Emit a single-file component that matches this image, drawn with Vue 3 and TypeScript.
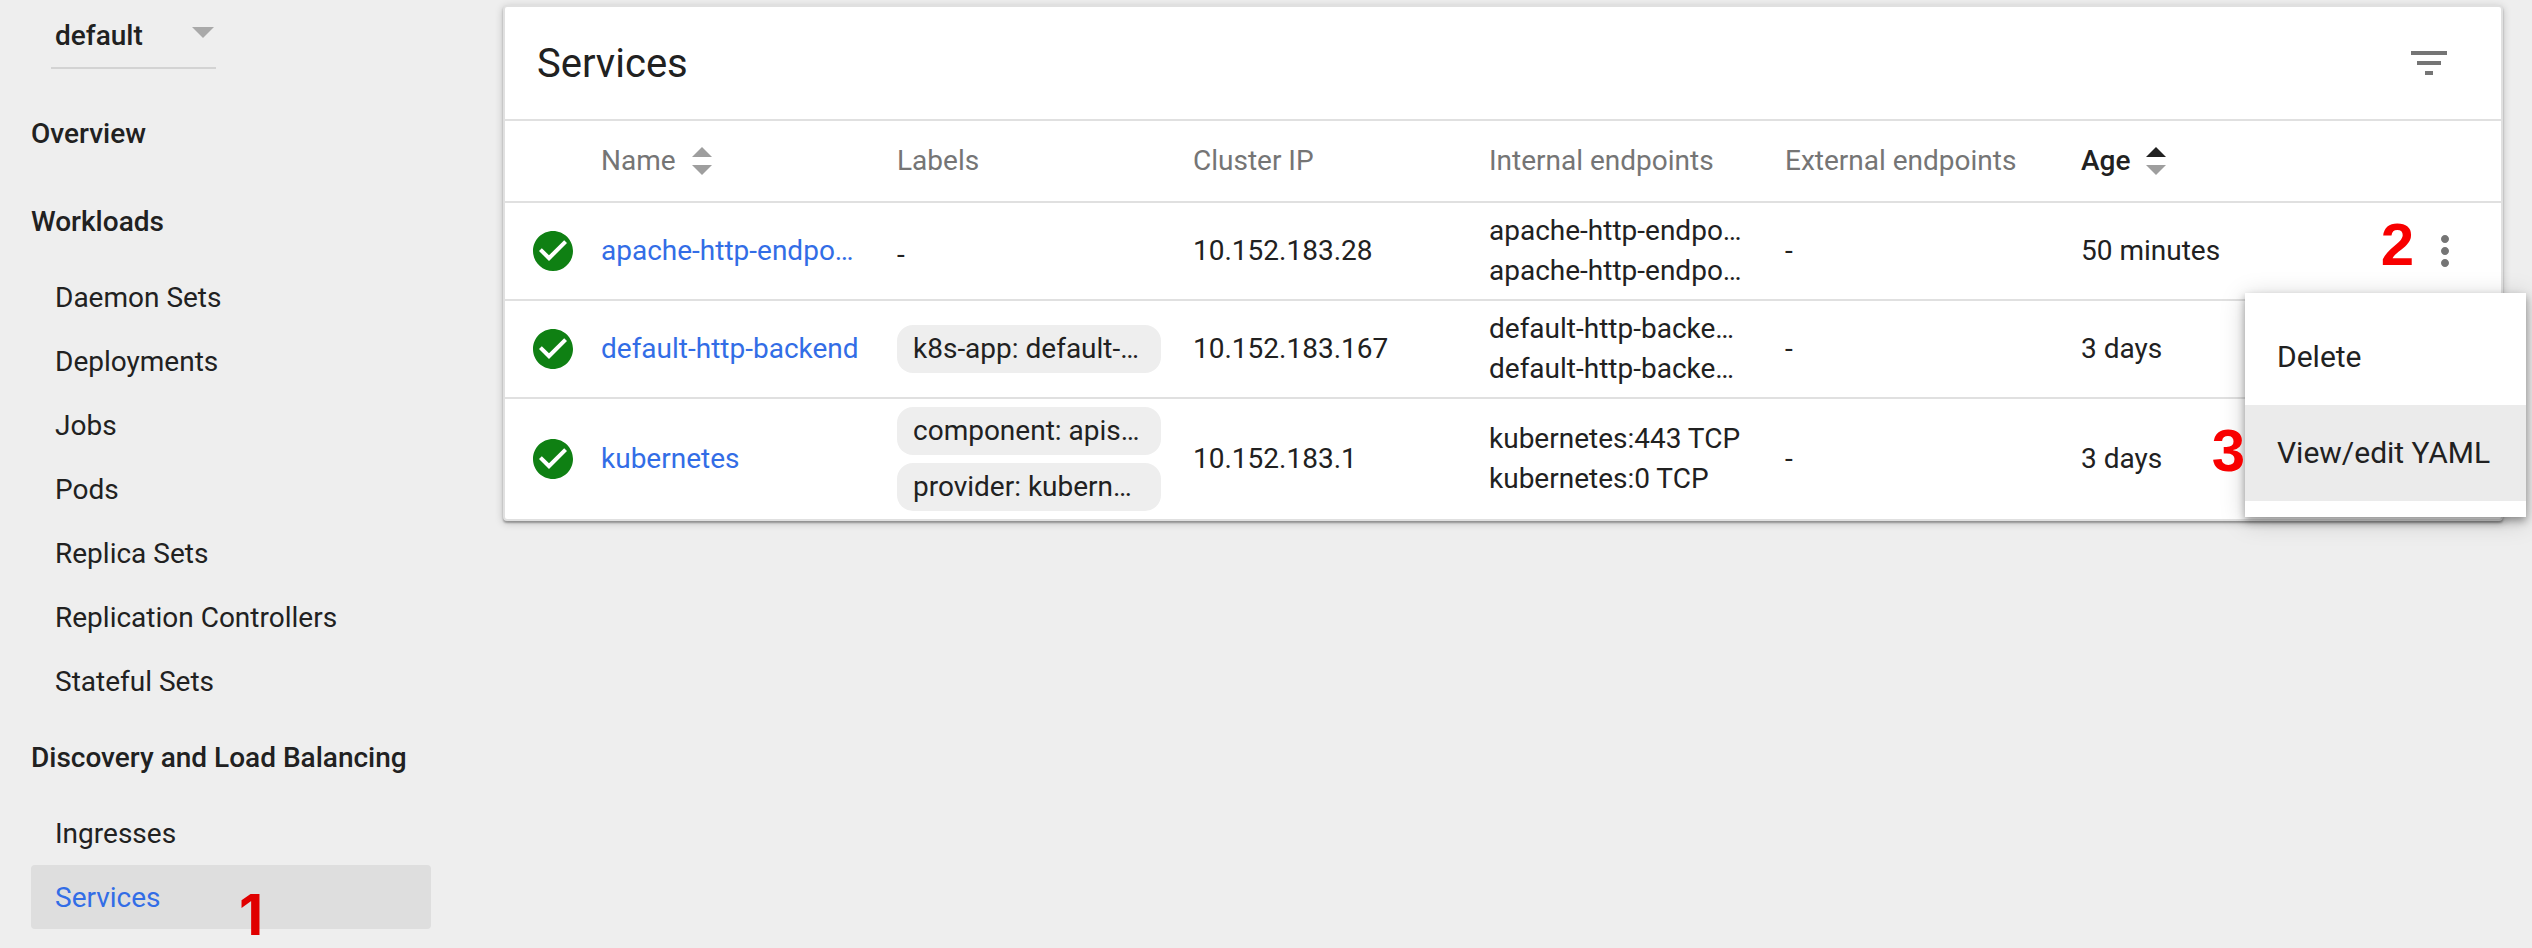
<script setup lang="ts">
import { ref } from 'vue'

interface NavGroup {
  title: string
  items: string[]
}

interface Column {
  key: string
  label: string
  sortable: boolean
}

interface Service {
  name: string
  labels: string[]
  clusterIp: string
  internal: string[]
  external: string
  age: string
}

const namespace = ref('default')
const activeItem = ref('Services')
const sortKey = ref('age')
const openMenu = ref(0)

const groups: NavGroup[] = [
  { title: 'Overview', items: [] },
  {
    title: 'Workloads',
    items: [
      'Daemon Sets',
      'Deployments',
      'Jobs',
      'Pods',
      'Replica Sets',
      'Replication Controllers',
      'Stateful Sets',
    ],
  },
  { title: 'Discovery and Load Balancing', items: ['Ingresses', 'Services'] },
]

const columns: Column[] = [
  { key: 'name', label: 'Name', sortable: true },
  { key: 'labels', label: 'Labels', sortable: false },
  { key: 'ip', label: 'Cluster IP', sortable: false },
  { key: 'internal', label: 'Internal endpoints', sortable: false },
  { key: 'external', label: 'External endpoints', sortable: false },
  { key: 'age', label: 'Age', sortable: true },
]

const services: Service[] = [
  {
    name: 'apache-http-endpo…',
    labels: [],
    clusterIp: '10.152.183.28',
    internal: ['apache-http-endpo…', 'apache-http-endpo…'],
    external: '-',
    age: '50 minutes',
  },
  {
    name: 'default-http-backend',
    labels: ['k8s-app: default-…'],
    clusterIp: '10.152.183.167',
    internal: ['default-http-backe…', 'default-http-backe…'],
    external: '-',
    age: '3 days',
  },
  {
    name: 'kubernetes',
    labels: ['component: apis…', 'provider: kubern…'],
    clusterIp: '10.152.183.1',
    internal: ['kubernetes:443 TCP', 'kubernetes:0 TCP'],
    external: '-',
    age: '3 days',
  },
]
</script>

<template>
  <div class="page">
    <aside class="sidebar">
      <div class="namespace">
        <select v-model="namespace" aria-label="Namespace">
          <option value="default">default</option>
        </select>
        <svg class="caret" viewBox="0 0 22 11" aria-hidden="true"><path d="M0 0h22L11 11z" /></svg>
      </div>
      <nav>
        <section v-for="group in groups" :key="group.title">
          <a class="group" href="#">{{ group.title }}</a>
          <a
            v-for="item in group.items"
            :key="item"
            class="item"
            :class="{ active: item === activeItem }"
            href="#"
            @click.prevent="activeItem = item"
          >
            {{ item }}
            <span v-if="item === 'Services'" class="step step-one">1</span>
          </a>
        </section>
      </nav>
    </aside>

    <main>
      <section class="card">
        <header>
          <h1>Services</h1>
          <button type="button" class="icon-button" aria-label="Filter">
            <svg viewBox="0 0 24 24"><path d="M10 18h4v-2h-4v2zM3 6v2h18V6H3zm3 7h12v-2H6v2z" /></svg>
          </button>
        </header>
        <table>
          <colgroup>
            <col class="col-status" />
            <col v-for="column in columns" :key="column.key" />
            <col class="col-actions" />
          </colgroup>
          <thead>
            <tr>
              <td></td>
              <th
                v-for="column in columns"
                :key="column.key"
                scope="col"
                :class="{ sorted: column.key === sortKey }"
              >
                <button v-if="column.sortable" type="button" class="sort" @click="sortKey = column.key">
                  {{ column.label }}
                  <svg viewBox="0 0 20 28" aria-hidden="true">
                    <path class="up" d="M10 0l10 10H0z" />
                    <path d="M0 18h20L10 28z" />
                  </svg>
                </button>
                <template v-else>{{ column.label }}</template>
              </th>
              <td></td>
            </tr>
          </thead>
          <tbody>
            <tr v-for="(service, index) in services" :key="service.name">
              <td class="status">
                <svg viewBox="0 0 24 24" role="img" aria-label="Running">
                  <path
                    d="M12 2C6.48 2 2 6.48 2 12s4.480 10 10 10 10-4.480 10-10S17.520 2 12 2zm-2 15l-5-5 1.410-1.410L10 14.170l7.590-7.590L19 8l-9 9z"
                  />
                </svg>
              </td>
              <td><a class="link" href="#">{{ service.name }}</a></td>
              <td>
                <ul v-if="service.labels.length" class="chips">
                  <li v-for="label in service.labels" :key="label">{{ label }}</li>
                </ul>
                <div v-else class="no-chips">-</div>
              </td>
              <td>{{ service.clusterIp }}</td>
              <td>
                <div v-for="(endpoint, n) in service.internal" :key="n">{{ endpoint }}</div>
              </td>
              <td>{{ service.external }}</td>
              <td>{{ service.age }}</td>
              <td>
                <div class="actions-box">
                  <span v-if="index === 0" class="step step-two">2</span>
                  <button type="button" class="icon-button" aria-label="Actions" @click="openMenu = index">
                    <svg viewBox="0 0 24 24">
                      <path
                        d="M12 8c1.100 0 2-.9 2-2s-.9-2-2-2-2 .9-2 2 .9 2 2 2zm0 2c-1.100 0-2 .9-2 2s.9 2 2 2 2-.9 2-2-.9-2-2-2zm0 6c-1.100 0-2 .9-2 2s.9 2 2 2 2-.9 2-2-.9-2-2-2z"
                      />
                    </svg>
                  </button>
                  <div v-if="index === openMenu" class="menu" role="menu">
                    <button type="button" role="menuitem">Delete</button>
                    <button type="button" role="menuitem" class="focused">View/edit YAML</button>
                    <span class="step step-three">3</span>
                  </div>
                </div>
              </td>
            </tr>
          </tbody>
        </table>
      </section>
    </main>
  </div>
</template>

<style>
body {
  margin: 0;
  background: #eee;
}
</style>

<style scoped>
.page {
  display: flex;
  align-items: flex-start;
  min-height: 100vh;
  overflow: hidden;
  color: #212121;
  background: #eee;
  font-family: Roboto, 'Liberation Sans', sans-serif;
  font-size: 28px;
  line-height: 40px;
}

* {
  box-sizing: border-box;
}

button,
select {
  padding: 0;
  border: 0;
  color: inherit;
  background: none;
  font: inherit;
}

a {
  color: inherit;
  text-decoration: none;
}

svg {
  display: block;
  fill: currentColor;
}

.sidebar {
  flex: none;
  width: 431px;
  padding: 0 0 16px 31px;
}

.namespace {
  position: relative;
  width: 165px;
  margin: 0 0 20px 20px;
  border-bottom: 2px solid #d3d3d3;
}

.namespace select {
  display: block;
  width: 100%;
  height: 67px;
  padding: 4px 0 0 4px;
  appearance: none;
  font-weight: 500;
}

.caret {
  position: absolute;
  top: 27px;
  right: 2px;
  width: 22px;
  color: #a9a9a9;
  pointer-events: none;
}

.group {
  display: block;
  padding-top: 2px;
  line-height: 86px;
  font-weight: 500;
  white-space: nowrap;
}

.item {
  position: relative;
  display: block;
  padding: 2px 0 0 24px;
  border-radius: 4px;
  line-height: 62px;
}

.item.active {
  color: #326de6;
  background: #dedede;
}

main {
  flex: 1;
  min-width: 0;
  padding: 5px 29px 29px 72px;
}

.card {
  border: 2px solid #e0e0e0;
  border-radius: 4px;
  background: #fff;
  box-shadow: 0 2px 2px rgba(0, 0, 0, 0.3), 0 2px 8px rgba(0, 0, 0, 0.2);
}

header {
  display: flex;
  align-items: center;
  justify-content: space-between;
  height: 114px;
  padding: 0 48px 0 32px;
  border-bottom: 2px solid #e0e0e0;
}

h1 {
  margin: 0;
  padding-top: 2px;
  font-size: 40px;
  font-weight: 400;
  line-height: 48px;
}

.icon-button {
  display: block;
  flex: none;
  color: #757575;
}

.icon-button svg,
.status svg {
  width: 48px;
  height: 48px;
}

table {
  width: 100%;
  table-layout: fixed;
  border-collapse: separate;
  border-spacing: 0;
}

.col-status {
  width: 96px;
}

.col-actions {
  width: 124px;
}

th,
td {
  padding: 8px 32px 8px 0;
  border-bottom: 2px solid #e0e0e0;
  text-align: left;
  vertical-align: middle;
  white-space: nowrap;
}

tbody tr:last-child td {
  border-bottom: 0;
}

th {
  height: 82px;
  color: #757575;
  font-weight: 400;
}

.sorted {
  color: #212121;
  font-weight: 500;
}

.sort {
  display: flex;
  align-items: center;
  gap: 16px;
}

.sort svg {
  width: 20px;
  height: 28px;
  color: #9e9e9e;
}

.sorted .up {
  fill: #212121;
}

.status {
  padding-left: 24px;
  padding-right: 0;
  color: #0f8013;
}

.link {
  color: #326de6;
}

.chips {
  display: flex;
  flex-direction: column;
  gap: 8px;
  margin: 0;
  padding: 0;
  list-style: none;
}

.chips li {
  height: 48px;
  padding: 0 16px;
  overflow: hidden;
  border-radius: 16px;
  background: #eee;
  line-height: 48px;
}

.no-chips {
  padding-top: 8px;
}

.actions-box {
  position: relative;
  display: flex;
  justify-content: flex-end;
}

.menu {
  position: absolute;
  z-index: 1;
  top: 66px;
  right: -57px;
  min-width: 281px;
  padding: 16px 0;
  background: #fff;
  box-shadow: 0 4px 8px rgba(0, 0, 0, 0.35), 0 4px 24px rgba(0, 0, 0, 0.18);
}

.menu button {
  display: block;
  width: 100%;
  padding: 0 32px;
  font-size: 30px;
  line-height: 96px;
  text-align: left;
}

.menu .focused {
  background: #ebebeb;
}

/* Numbered tutorial markers laid over the interface. */
.step {
  position: absolute;
  color: #f80000;
  font-family: 'Liberation Sans', sans-serif;
  font-size: 60px;
  font-weight: 700;
  line-height: 60px;
}

.step-one {
  top: 20px;
  left: 208px;
  color: #e00000;
  font-family: Inter, sans-serif;
  font-size: 56px;
}

.step-two {
  top: -12px;
  right: 55px;
}

.step-three {
  top: 128px;
  right: 100%;
}
</style>
